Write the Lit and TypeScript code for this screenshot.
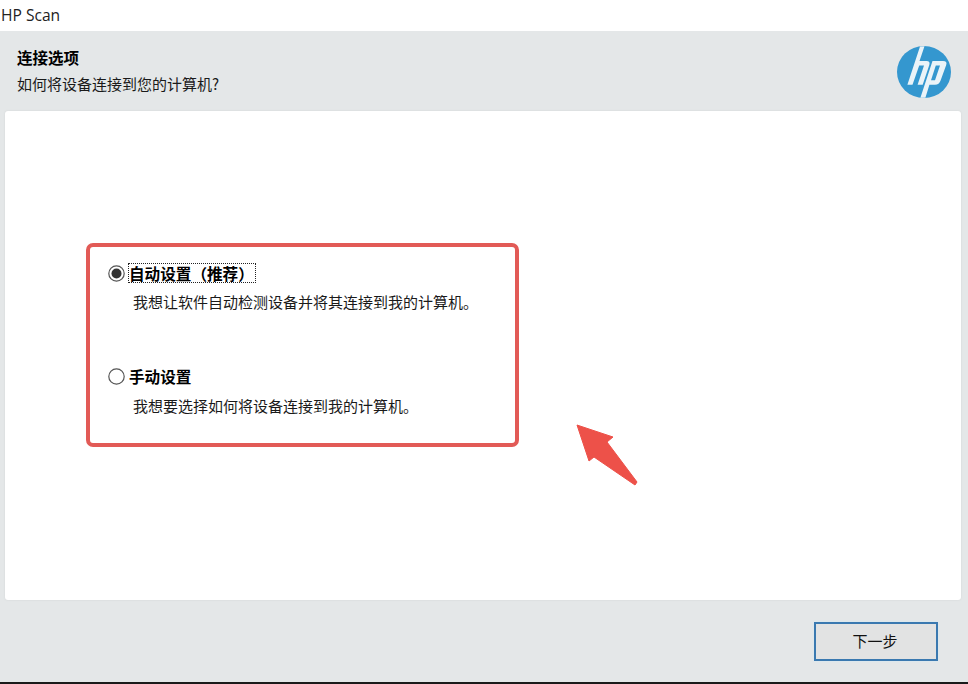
import { LitElement, html, svg, css } from "lit";
import { customElement } from "lit/decorators.js";

@customElement("app-root")
export class AppRoot extends LitElement {
  static styles = css`
    :host {
      display: flex;
      flex-direction: column;
      width: 968px;
      height: 684px;
      overflow: hidden;
      background: #e4e7e8;
      color: #111;
      font-family: "Noto Sans CJK SC", "Noto Sans", sans-serif;
    }
    .titlebar {
      height: 31px;
      background: #fff;
      padding-left: 1px;
      display: flex;
      align-items: center;
      font: 15.6px/31px "Open Sans", "Noto Sans", sans-serif;
      color: #222;
      flex: none;
    }
    .header {
      height: 80px;
      flex: none;
      display: flex;
      justify-content: space-between;
      padding: 16px 17px 0 17px;
      box-sizing: border-box;
    }
    .heading {
      font-size: 15.5px;
      font-weight: 700;
      line-height: 20px;
      color: #000;
    }
    .sub {
      font-size: 15px;
      line-height: 20px;
      margin-top: 7px;
      color: #1a1a1a;
    }
    .logo {
      width: 54px;
      height: 52px;
      margin-top: -1px;
      display: block;
    }
    .panel {
      flex: none;
      height: 489px;
      margin: 0 7px 0 5px;
      background: #fff;
      border-radius: 3px;
      box-shadow: 0 0 2px #cfd2d2;
      padding: 132px 0 0 81px;
      box-sizing: border-box;
      position: relative;
    }
    .redbox {
      width: 433px;
      height: 204px;
      box-sizing: border-box;
      border: 4px solid #e25a56;
      border-radius: 7px;
      padding: 15px 0 0 18px;
      display: flex;
      flex-direction: column;
      gap: 53px;
    }
    .head-row {
      display: flex;
      align-items: center;
      height: 22px;
      gap: 3px;
    }
    .radio {
      width: 17px;
      height: 17px;
      flex: none;
      display: block;
    }
    .label {
      font-size: 15.6px;
      font-weight: 700;
      line-height: 20px;
      color: #000;
      outline: 1px dotted transparent;
      outline-offset: -1px;
      padding: 0 2px 0 1px;
    }
    .label.focused {
      outline-color: #222;
    }
    .desc {
      font-size: 15px;
      line-height: 20px;
      margin: 8px 0 0 25px;
      color: #1a1a1a;
      white-space: nowrap;
    }
    .desc.second {
      margin-top: 9px;
    }
    .arrow {
      position: absolute;
      left: 571px;
      top: 313px;
      width: 64px;
      height: 62px;
    }
    .footer {
      flex: 1;
      display: flex;
      justify-content: flex-end;
      align-items: flex-start;
      padding: 22px 30px 0 0;
    }
    .next {
      width: 124px;
      height: 39px;
      box-sizing: border-box;
      border: 2px solid #3a79b0;
      background: #e2e3e3;
      box-shadow: 0 0 2px #cfeaf8;
      color: #111;
      font: 15px "Noto Sans CJK SC", sans-serif;
      padding: 0 2px 3px 0;
    }
    .bottomline {
      height: 2px;
      background: #1a1a1a;
      flex: none;
    }
  `;

  private radio(checked: boolean) {
    return html`<svg class="radio" viewBox="0 0 17 17" aria-hidden="true">
      <circle cx="8.5" cy="8.5" r="7.7" fill="#fff" stroke="#555" stroke-width="1.2"></circle>
      ${checked ? svg`<circle cx="8.5" cy="8.5" r="5" fill="#333"></circle>` : ""}
    </svg>`;
  }

  render() {
    return html`
      <div class="titlebar">HP Scan</div>
      <div class="header">
        <div>
          <div class="heading">连接选项</div>
          <div class="sub">如何将设备连接到您的计算机?</div>
        </div>
        <svg class="logo" viewBox="0 0 54 52" aria-label="HP">
          <ellipse cx="27" cy="26" rx="27" ry="26" fill="#3497cf"></ellipse>
          <path fill="#eaf3f8" d="M23 0.4 L27.5 0.2 L22.5 15 H29.5 Q33.5 15 32.3 19 L25.7 38.7 H20.6 L27 19.5 H22.2 L15.5 38.7 H10.4 Z"></path>
          <path fill="#eaf3f8" fill-rule="evenodd" d="M35.5 15 H46 Q50.5 15 49.2 19 L43.6 34.5 Q42.2 38.7 38 38.7 H32.4 L28.4 51.8 H23.4 Z M38.8 19.5 L34 34.3 H38 L43 19.5 Z"></path>
        </svg>
      </div>
      <div class="panel">
        <div class="redbox">
          <div>
            <div class="head-row">
              ${this.radio(true)}
              <span class="label focused">自动设置（推荐）</span>
            </div>
            <div class="desc">我想让软件自动检测设备并将其连接到我的计算机。</div>
          </div>
          <div>
            <div class="head-row">
              ${this.radio(false)}
              <span class="label">手动设置</span>
            </div>
            <div class="desc second">我想要选择如何将设备连接到我的计算机。</div>
          </div>
        </div>
        <svg class="arrow" viewBox="0 0 64 62" aria-hidden="true">
          <path fill="#ed5149" stroke="#ed5149" stroke-width="1" stroke-linejoin="round"
            d="M1 1 L37 13 L31 18 L61 58 L59 61 L18 33 L13 37 Z"></path>
        </svg>
      </div>
      <div class="footer">
        <button class="next">下一步</button>
      </div>
      <div class="bottomline"></div>
    `;
  }
}
